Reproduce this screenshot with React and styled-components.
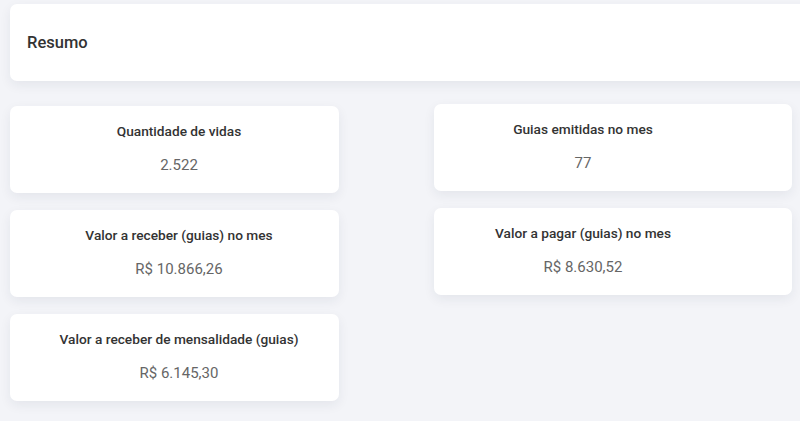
import React from 'react';
import styled, { createGlobalStyle } from 'styled-components';

const GlobalStyle = createGlobalStyle`
    html, body {
        margin: 0;
        padding: 0;
        background-color: #f3f4f8;
        overflow: hidden;
    }
    body {
        font-family: Roboto, "Liberation Sans", sans-serif;
    }
`

const Page = styled.div`
    padding: 4px 0 0 10px;
    width: 800px;
    height: 421px;
    box-sizing: border-box;
`
const Header = styled.div`
    display: flex;
    align-items: center;
    height: 77px;
    margin-right: -20px;
    padding-left: 17px;
    background-color: #fff;
    border-radius: 7px;
    box-shadow: 0 4px 12px rgba(30, 40, 70, 0.07);
    font-size: 16.5px;
    font-weight: 500;
    color: #333;
`
const Columns = styled.div`
    display: flex;
    gap: 95px;
    margin-top: 25px;
`
const Column = styled.div`
    display: flex;
    flex-direction: column;
    gap: 17px;
    width: ${props => props.width}px;
    margin-top: ${props => props.shift || 0}px;
`
const Card = styled.div`
    display: flex;
    flex-direction: column;
    align-items: center;
    gap: 15px;
    height: 87px;
    box-sizing: border-box;
    padding: 17px ${props => props.right}px 0 ${props => props.left}px;
    background-color: #fff;
    border-radius: 7px;
    box-shadow: 0 4px 12px rgba(30, 40, 70, 0.07);
`
const Label = styled.div`
    font-size: 13.7px;
    font-weight: 500;
    line-height: 17px;
    color: #333;
`
const Value = styled.div`
    font-size: 15px;
    line-height: 20px;
    color: #666;
`

const left = [
    { label: 'Quantidade de vidas', value: '2.522' },
    { label: 'Valor a receber (guias) no mes', value: 'R$ 10.866,26' },
    { label: 'Valor a receber de mensalidade (guias)', value: 'R$ 6.145,30' },
]

const right = [
    { label: 'Guias emitidas no mes', value: '77' },
    { label: 'Valor a pagar (guias) no mes', value: 'R$ 8.630,52' },
]

const App = () => {
    return (
        <Page>
            <GlobalStyle />
            <Header>Resumo</Header>
            <Columns>
                <Column width={329}>
                    {left.map(item => (
                        <Card key={item.label} left={9} right={0}>
                            <Label>{item.label}</Label>
                            <Value>{item.value}</Value>
                        </Card>
                    ))}
                </Column>
                <Column width={358} shift={-2}>
                    {right.map(item => (
                        <Card key={item.label} left={0} right={60}>
                            <Label>{item.label}</Label>
                            <Value>{item.value}</Value>
                        </Card>
                    ))}
                </Column>
            </Columns>
        </Page>
    )
}

export default App;
